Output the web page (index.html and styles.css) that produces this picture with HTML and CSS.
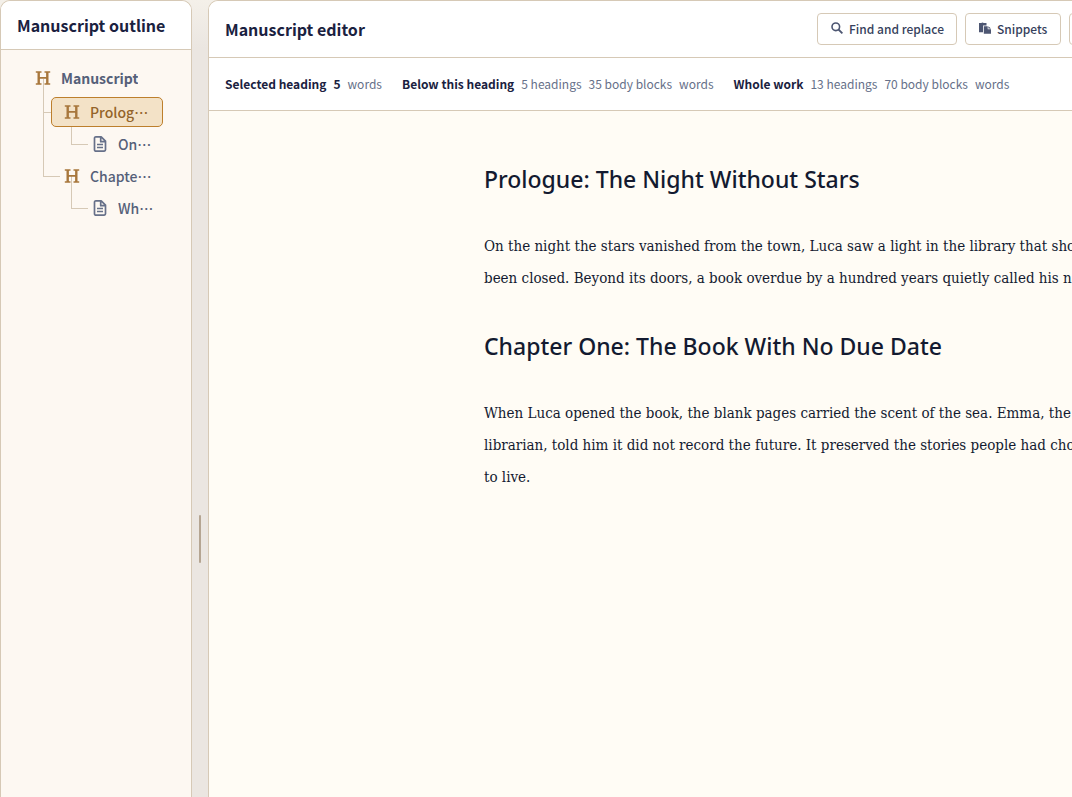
FILE: index.html
```
<!DOCTYPE html>
<html lang="en">
<head>
<meta charset="utf-8">
<title>Manuscript editor</title>
<link rel="stylesheet" href="styles.css">
</head>
<body>

<svg class="sprite" aria-hidden="true">
<symbol id="heading" viewBox="0 0 16 16">
<path d="M.8 1.200h5.700v1.500H4.900v4.300h6.200V2.700H9.500V1.200h5.700v1.500h-1.700v10.600h1.700v1.500H9.500v-1.500h1.600V8.700H4.900v4.600h1.600v1.500H.8v-1.500h1.700V2.700H.8z" fill="currentColor"/>
</symbol>
<symbol id="document" viewBox="0 0 16 16">
<path d="M4 .9h5.200l4.300 4.300v8.600a1.300 1.300 0 0 1-1.300 1.300H4A1.300 1.300 0 0 1 2.500 13.800V2.200A1.300 1.300 0 0 1 4 .9z M8.700 1v4.700h4.700 M5 8.500h6 M5 11.500h6" fill="none" stroke="currentColor" stroke-width="1.700" stroke-linejoin="round"/>
</symbol>
</svg>

<div class="workspace">

<aside class="outline">
<header class="outline-header">
<h2>Manuscript outline</h2>
</header>
<nav class="tree">
<ul>
<li>
<button class="row root"><svg><use href="#heading"/></svg><span>Manuscript</span></button>
<ul>
<li>
<button class="row selected"><svg><use href="#heading"/></svg><span>Prologue: The Night Without Stars</span></button>
<ul>
<li><button class="row doc"><svg><use href="#document"/></svg><span>On the night the stars vanished</span></button></li>
</ul>
</li>
<li>
<button class="row"><svg><use href="#heading"/></svg><span>Chapter One: The Book With No Due Date</span></button>
<ul>
<li><button class="row doc"><svg><use href="#document"/></svg><span>When Luca opened the book</span></button></li>
</ul>
</li>
</ul>
</li>
</ul>
</nav>
</aside>

<div class="splitter" role="separator" aria-orientation="vertical"><span class="grip"></span></div>

<main class="editor">
<header class="editor-header">
<h1>Manuscript editor</h1>
<div class="actions">
<button class="tool">
<svg viewBox="0 0 12 12"><circle cx="4.800" cy="4.800" r="3.800" fill="none" stroke="currentColor" stroke-width="1.600"/><path d="M7.500 7.500l3.900 3.900" stroke="currentColor" stroke-width="1.800"/></svg>
Find and replace
</button>
<button class="tool">
<svg viewBox="0 0 12 12"><path d="M0 1h2.200a1.500 .9 0 0 1 2.600 0H7.500v2.500H4v6.700H0z" fill="currentColor"/><path d="M4.800 4.300h3.900v2.900H12v4.600H4.800z M9.400 4.300L12 6.500H9.400z" fill="currentColor"/></svg>
Snippets
</button>
<button class="tool" aria-label="More"></button>
</div>
</header>

<div class="stats">
<div class="stat"><strong>Selected heading</strong><strong>5</strong><span>words</span></div>
<div class="stat"><strong>Below this heading</strong><span>5 headings</span><span>35 body blocks</span><span>words</span></div>
<div class="stat"><strong>Whole work</strong><span>13 headings</span><span>70 body blocks</span><span>words</span></div>
</div>

<article class="page">
<h2>Prologue: The Night Without Stars</h2>
<p>On the night the stars vanished from the town, Luca saw a light in the library that should have been closed. Beyond its doors, a book overdue by a hundred years quietly called his name.</p>
<h2>Chapter One: The Book With No Due Date</h2>
<p>When Luca opened the book, the blank pages carried the scent of the sea. Emma, the young librarian, told him it did not record the future. It preserved the stories people had chosen never to&nbsp;live.</p>
</article>
</main>

</div>
</body>
</html>
```
FILE: styles.css
```
:root {
  --border: #d6c9b6;
  --ink: #1a2140;
  --muted: #667089;
  --slate: #556079;
  --accent: #a8773c;
  --ui: "Noto Sans CJK JP", "Noto Sans", sans-serif;
}

* {
  box-sizing: border-box;
  margin: 0;
  padding: 0;
}

body {
  height: 100vh;
  overflow: hidden;
  background: linear-gradient(#f4f0e9, #ebe6e1 48px);
  color: var(--ink);
  font-family: var(--ui);
}

button {
  font-family: inherit;
  cursor: pointer;
}

.sprite {
  display: none;
}

.workspace {
  display: flex;
  min-width: 1440px;
  height: 100vh;
}

/* outline */
.outline {
  flex: 0 0 192px;
  border: 1px solid var(--border);
  border-bottom: 0;
  border-radius: 10px 10px 0 0;
  background: #fdf8f2;
  overflow: hidden;
}

.outline-header {
  height: 49px;
  display: flex;
  align-items: center;
  padding: 0 16px;
  background: #fff;
  border-bottom: 1px solid var(--border);
}

.outline-header h2,
.editor-header h1 {
  font-size: 16px;
  line-height: 24px;
  font-weight: 700;
  white-space: nowrap;
}

.tree {
  padding: 13px 28px 0 21px;
  isolation: isolate;
}

.tree ul {
  list-style: none;
}

.tree ul ul {
  padding: 2px 0 0 29px;
}

.tree ul ul ul {
  padding-left: 28px;
}

.tree li {
  position: relative;
}

.tree li + li {
  margin-top: 2px;
}

/* connector lines, anchored on the parent icon */
.tree li li::before,
.tree li li::after {
  content: "";
  position: absolute;
  z-index: -1;
  left: -8px;
}

.tree li li::before {
  top: -18px;
  height: 33px;
  width: 16px;
  border-left: 1px solid var(--border);
  border-bottom: 1px solid var(--border);
}

.tree li li:not(:last-child)::after {
  top: 14px;
  bottom: -18px;
  border-left: 1px solid var(--border);
}

.row {
  display: flex;
  align-items: center;
  gap: 10px;
  width: 100%;
  height: 30px;
  padding: 0 8px 0 12px;
  border: 1px solid transparent;
  border-radius: 5px;
  background: none;
  color: var(--slate);
  font-size: 14px;
  line-height: 22px;
  font-weight: 500;
  text-align: left;
}

.row svg {
  flex: none;
  width: 16px;
  height: 16px;
  color: var(--accent);
}

.row span {
  overflow: hidden;
  white-space: nowrap;
  text-overflow: ellipsis;
}

.row.root {
  margin-bottom: 2px;
  font-weight: 700;
}

.row.doc svg {
  color: var(--muted);
}

.row.selected {
  background: #f3e2c7;
  border-color: #bd7f2c;
  color: #94642a;
}

/* splitter */
.splitter {
  flex: 0 0 16px;
  display: flex;
  justify-content: center;
  padding-top: 515px;
}

.grip {
  width: 2px;
  height: 48px;
  border-radius: 1px;
  background: #b5a592;
}

/* editor */
.editor {
  flex: 1;
  border: 1px solid var(--border);
  border-bottom: 0;
  border-radius: 10px 10px 0 0;
  background: #fffcf5;
  overflow: hidden;
}

.editor-header {
  height: 57px;
  display: grid;
  grid-template-columns: 592px 1fr;
  align-items: center;
  padding: 0 16px;
  background: #fff;
  border-bottom: 1px solid var(--border);
}

.actions {
  display: flex;
  gap: 8px;
}

.tool {
  display: flex;
  align-items: center;
  gap: 6px;
  min-width: 96px;
  height: 32px;
  padding: 0 12px 2px 13px;
  border: 1px solid var(--border);
  border-radius: 4px;
  background: #fff;
  color: #363f5c;
  font-size: 12px;
  font-weight: 500;
  white-space: nowrap;
}

.tool svg {
  width: 12px;
  height: 12px;
  color: #4d5672;
}

.stats {
  display: flex;
  align-items: center;
  gap: 20px;
  height: 53px;
  padding: 0 16px 2px;
  background: #fff;
  border-bottom: 1px solid var(--border);
  font-size: 12px;
  white-space: nowrap;
}

.stat {
  display: flex;
  gap: 7px;
}

.stat strong {
  font-weight: 700;
}

.stat span {
  color: var(--muted);
}

.page {
  width: 680px;
  margin: 0 auto;
  padding-top: 50px;
  color: #131a30;
}

.page h2 {
  margin-bottom: 33px;
  font: 500 23px/36px "Noto Sans", "Open Sans", sans-serif;
}

.page p {
  margin-bottom: 34px;
  font: 15px/32px "DejaVu Serif Condensed", "Liberation Serif", serif;
}
```
